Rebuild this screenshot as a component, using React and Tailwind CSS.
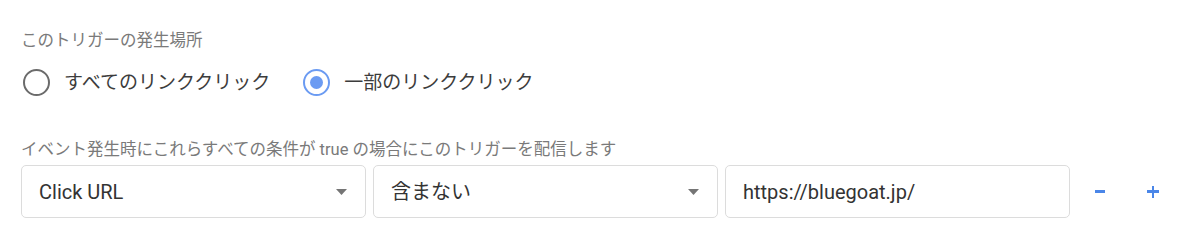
import React from 'react'

const font = { fontFamily: 'Roboto, "Noto Sans CJK JP", "Noto Sans", sans-serif' }

const Radio = ({ checked, label }) => (
  <label className="flex items-center cursor-pointer">
    {checked ? (
      <span className="w-[27px] h-[27px] rounded-full border-[2.5px] border-[#6b9bf2] flex items-center justify-center">
        <span className="w-[13px] h-[13px] rounded-full bg-[#6b9bf2]" />
      </span>
    ) : (
      <span className="w-[27px] h-[27px] rounded-full border-[2.5px] border-[#6b6b6b]" />
    )}
    <span className="ml-[14px] text-[19px] leading-[26px] text-[#3c3c3c]">{label}</span>
  </label>
)

const Arrow = () => (
  <svg width="11" height="6" viewBox="0 0 11 6" className="shrink-0">
    <path d="M0 0 L11 0 L5.5 6 Z" fill="#757575" />
  </svg>
)

const SelectBox = ({ value }) => (
  <div className="w-[345px] h-[53px] shrink-0 rounded-[5px] border border-[#dcdcdc] flex items-center justify-between pl-[17px] pr-[18px]">
    <span className="text-[20px] text-[#333]">{value}</span>
    <Arrow />
  </div>
)

export default function App() {
  return (
    <div className="bg-white w-[1200px] h-[236px] pt-[30px] px-[21px]" style={font}>
      <div className="text-[16.5px] leading-[22px] text-[#7a7a7a]">このトリガーの発生場所</div>

      <div className="mt-[17px] pl-[2px] flex items-center gap-[33px]">
        <Radio label="すべてのリンククリック" />
        <Radio checked label="一部のリンククリック" />
      </div>

      <div className="mt-[44px] text-[16.5px] leading-[20px] text-[#7a7a7a]">
        イベント発生時にこれらすべての条件が true の場合にこのトリガーを配信します
      </div>

      <div className="mt-[5px] flex items-center gap-[7px]">
        <SelectBox value="Click URL" />
        <SelectBox value="含まない" />
        <div className="w-[345px] h-[53px] shrink-0 rounded-[5px] border border-[#dcdcdc] flex items-center pl-[17px]">
          <input
            className="w-full outline-none text-[20px] text-[#333] bg-transparent"
            defaultValue="https://bluegoat.jp/"
          />
        </div>
        <div className="ml-[3px] flex items-center gap-[13px]">
          <button className="w-10 h-10 flex items-center justify-center">
            <span className="block w-[10px] h-[2.5px] bg-[#4a86e8]" />
          </button>
          <button className="w-10 h-10 flex items-center justify-center relative">
            <span className="block w-[12px] h-[2.5px] bg-[#4a86e8]" />
            <span className="absolute block w-[2.5px] h-[12px] bg-[#4a86e8]" />
          </button>
        </div>
      </div>
    </div>
  )
}
